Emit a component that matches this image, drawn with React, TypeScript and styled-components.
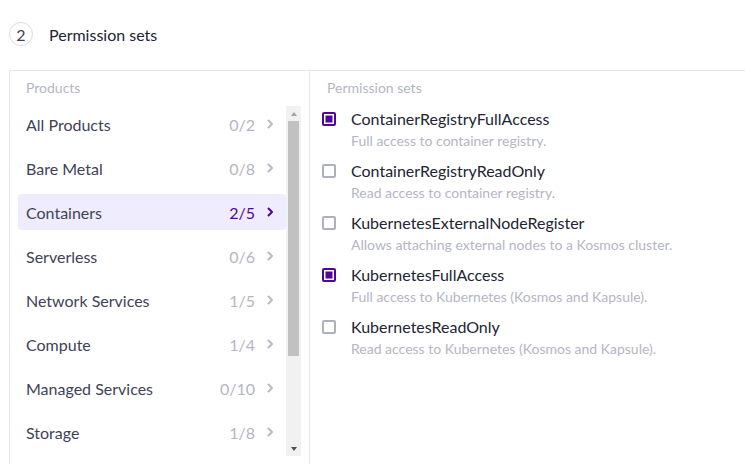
import React from "react";
import styled, { createGlobalStyle, css } from "styled-components";

const GlobalStyle = createGlobalStyle`
  html, body {
    margin: 0;
    padding: 0;
    background: #ffffff;
  }
  body {
    font-family: Lato, "Liberation Sans", sans-serif;
    color: #3f4257;
  }
`;

interface Product {
  name: string;
  selected: number;
  total: number;
}

interface PermissionSet {
  name: string;
  description: string;
  checked: boolean;
}

const products: Product[] = [
  { name: "All Products", selected: 0, total: 2 },
  { name: "Bare Metal", selected: 0, total: 8 },
  { name: "Containers", selected: 2, total: 5 },
  { name: "Serverless", selected: 0, total: 6 },
  { name: "Network Services", selected: 1, total: 5 },
  { name: "Compute", selected: 1, total: 4 },
  { name: "Managed Services", selected: 0, total: 10 },
  { name: "Storage", selected: 1, total: 8 },
];

const permissionSets: PermissionSet[] = [
  {
    name: "ContainerRegistryFullAccess",
    description: "Full access to container registry.",
    checked: true,
  },
  {
    name: "ContainerRegistryReadOnly",
    description: "Read access to container registry.",
    checked: false,
  },
  {
    name: "KubernetesExternalNodeRegister",
    description: "Allows attaching external nodes to a Kosmos cluster.",
    checked: false,
  },
  {
    name: "KubernetesFullAccess",
    description: "Full access to Kubernetes (Kosmos and Kapsule).",
    checked: true,
  },
  {
    name: "KubernetesReadOnly",
    description: "Read access to Kubernetes (Kosmos and Kapsule).",
    checked: false,
  },
];

// visible part of the products list vs its full scroll height
const LIST_HEIGHT = 350;
const CONTENT_HEIGHT = 476;
const TRACK_HEIGHT = LIST_HEIGHT - 30;

const Chevron: React.FC<{ color: string }> = ({ color }) => (
  <svg width="16" height="16" viewBox="0 0 16 16" fill="none">
    <path
      d="M6.5 4.5L10 8L6.5 11.5"
      stroke={color}
      strokeWidth="2"
      strokeLinecap="round"
      strokeLinejoin="round"
    />
  </svg>
);

export default function App() {
  const activeIndex = 2;
  const thumbHeight = Math.round((LIST_HEIGHT / CONTENT_HEIGHT) * TRACK_HEIGHT);

  return (
    <Root>
      <GlobalStyle />
      <Header>
        <StepNumber>2</StepNumber>
        <Title>Permission sets</Title>
      </Header>

      <Panel>
        <ProductsColumn>
          <ColumnLabel>Products</ColumnLabel>
          <ProductsBody>
            <ProductList>
              {products.map((product, index) => (
                <ProductRow key={product.name} active={index === activeIndex}>
                  <ProductName>{product.name}</ProductName>
                  <ProductCount active={index === activeIndex}>
                    {product.selected}/{product.total}
                  </ProductCount>
                  <ChevronBox>
                    <Chevron
                      color={index === activeIndex ? "#4f0599" : "#b8bac6"}
                    />
                  </ChevronBox>
                </ProductRow>
              ))}
            </ProductList>
            <Scrollbar>
              <ScrollButton>
                <Arrow direction="up" />
              </ScrollButton>
              <Track>
                <Thumb style={{ height: thumbHeight }} />
              </Track>
              <ScrollButton>
                <Arrow direction="down" />
              </ScrollButton>
            </Scrollbar>
          </ProductsBody>
        </ProductsColumn>

        <SetsColumn>
          <ColumnLabel>Permission sets</ColumnLabel>
          <SetList>
            {permissionSets.map((set) => (
              <SetItem key={set.name}>
                <Checkbox checked={set.checked} />
                <SetText>
                  <SetName>{set.name}</SetName>
                  <SetDescription>{set.description}</SetDescription>
                </SetText>
              </SetItem>
            ))}
          </SetList>
        </SetsColumn>
      </Panel>
    </Root>
  );
}

const Root = styled.div`
  padding: 22px 0 0 9px;
  height: 464px;
  box-sizing: border-box;
  overflow: hidden;
`;

const Header = styled.div`
  display: flex;
  align-items: center;
  gap: 16px;
  height: 24px;
`;

const StepNumber = styled.div`
  width: 24px;
  height: 24px;
  box-sizing: border-box;
  border: 1px solid #d9dbe5;
  border-radius: 50%;
  display: flex;
  align-items: center;
  justify-content: center;
  font-size: 16px;
  color: #3f4257;
`;

const Title = styled.div`
  font-size: 16px;
  color: #222433;
`;

const Panel = styled.div`
  margin-top: 24px;
  width: 800px;
  display: flex;
  border: 1px solid #e5e6ee;
  height: 420px;
`;

const ProductsColumn = styled.div`
  width: 300px;
  padding: 7px 8px 0;
  box-sizing: border-box;
  border-right: 1px solid #e5e6ee;
  display: flex;
  flex-direction: column;
  gap: 8px;
`;

const ColumnLabel = styled.div`
  font-size: 14px;
  line-height: 20px;
  color: #b4b6c3;
  padding-left: 8px;
`;

const ProductsBody = styled.div`
  display: flex;
  height: ${LIST_HEIGHT}px;
`;

const ProductList = styled.div`
  flex: 1;
  overflow: hidden;
  display: flex;
  flex-direction: column;
  gap: 8px;
`;

const Scrollbar = styled.div`
  width: 15px;
  display: flex;
  flex-direction: column;
  background: #f1f1f1;
`;

const ScrollButton = styled.div`
  flex: 0 0 15px;
  display: flex;
  align-items: center;
  justify-content: center;
`;

const Arrow = styled.span<{ direction: "up" | "down" }>`
  width: 0;
  height: 0;
  border-left: 3.5px solid transparent;
  border-right: 3.5px solid transparent;
  ${({ direction }) =>
    direction === "up"
      ? css`
          border-bottom: 4px solid #a3a3a3;
        `
      : css`
          border-top: 4px solid #505050;
        `}
`;

const Track = styled.div`
  flex: 1;
  display: flex;
  flex-direction: column;
  padding: 0 2px;
`;

const Thumb = styled.div`
  background: #c1c1c1;
`;

interface ActiveProps {
  active: boolean;
}

const ProductRow = styled.div<ActiveProps>`
  flex: 0 0 36px;
  display: flex;
  align-items: center;
  padding: 0 8px;
  border-radius: 4px;
  cursor: pointer;

  ${({ active }) =>
    active &&
    css`
      background: #efedfd;
    `}
`;

const ProductName = styled.div`
  flex: 1;
  font-size: 16px;
  color: #3f4257;
`;

const ProductCount = styled.div<ActiveProps>`
  font-size: 16px;
  color: ${({ active }) => (active ? "#4f0599" : "#b4b6c3")};
`;

const ChevronBox = styled.div`
  display: flex;
  margin-left: 7px;
`;

const SetsColumn = styled.div`
  flex: 1;
  padding: 7px 0 0 12px;
  display: flex;
  flex-direction: column;
  gap: 11px;

  ${ColumnLabel} {
    padding-left: 5px;
  }
`;

const SetList = styled.div`
  display: flex;
  flex-direction: column;
  gap: 10px;
`;

const SetItem = styled.label`
  display: flex;
  align-items: flex-start;
  gap: 15px;
  cursor: pointer;
`;

const Checkbox = styled.span<{ checked: boolean }>`
  flex: 0 0 14px;
  width: 14px;
  height: 14px;
  margin-top: 3px;
  box-sizing: border-box;
  border-radius: 2px;
  border: 2px solid ${({ checked }) => (checked ? "#4f0599" : "#aeb0bc")};
  background: ${({ checked }) => (checked ? "#4f0599" : "#ffffff")};
  box-shadow: ${({ checked }) =>
    checked ? "inset 0 0 0 1.5px #ffffff" : "none"};
`;

const SetText = styled.div`
  display: flex;
  flex-direction: column;
  gap: 2px;
`;

const SetName = styled.div`
  font-size: 16px;
  line-height: 20px;
  color: #222433;
`;

const SetDescription = styled.div`
  font-size: 14px;
  line-height: 20px;
  color: #b4b6c3;
`;
